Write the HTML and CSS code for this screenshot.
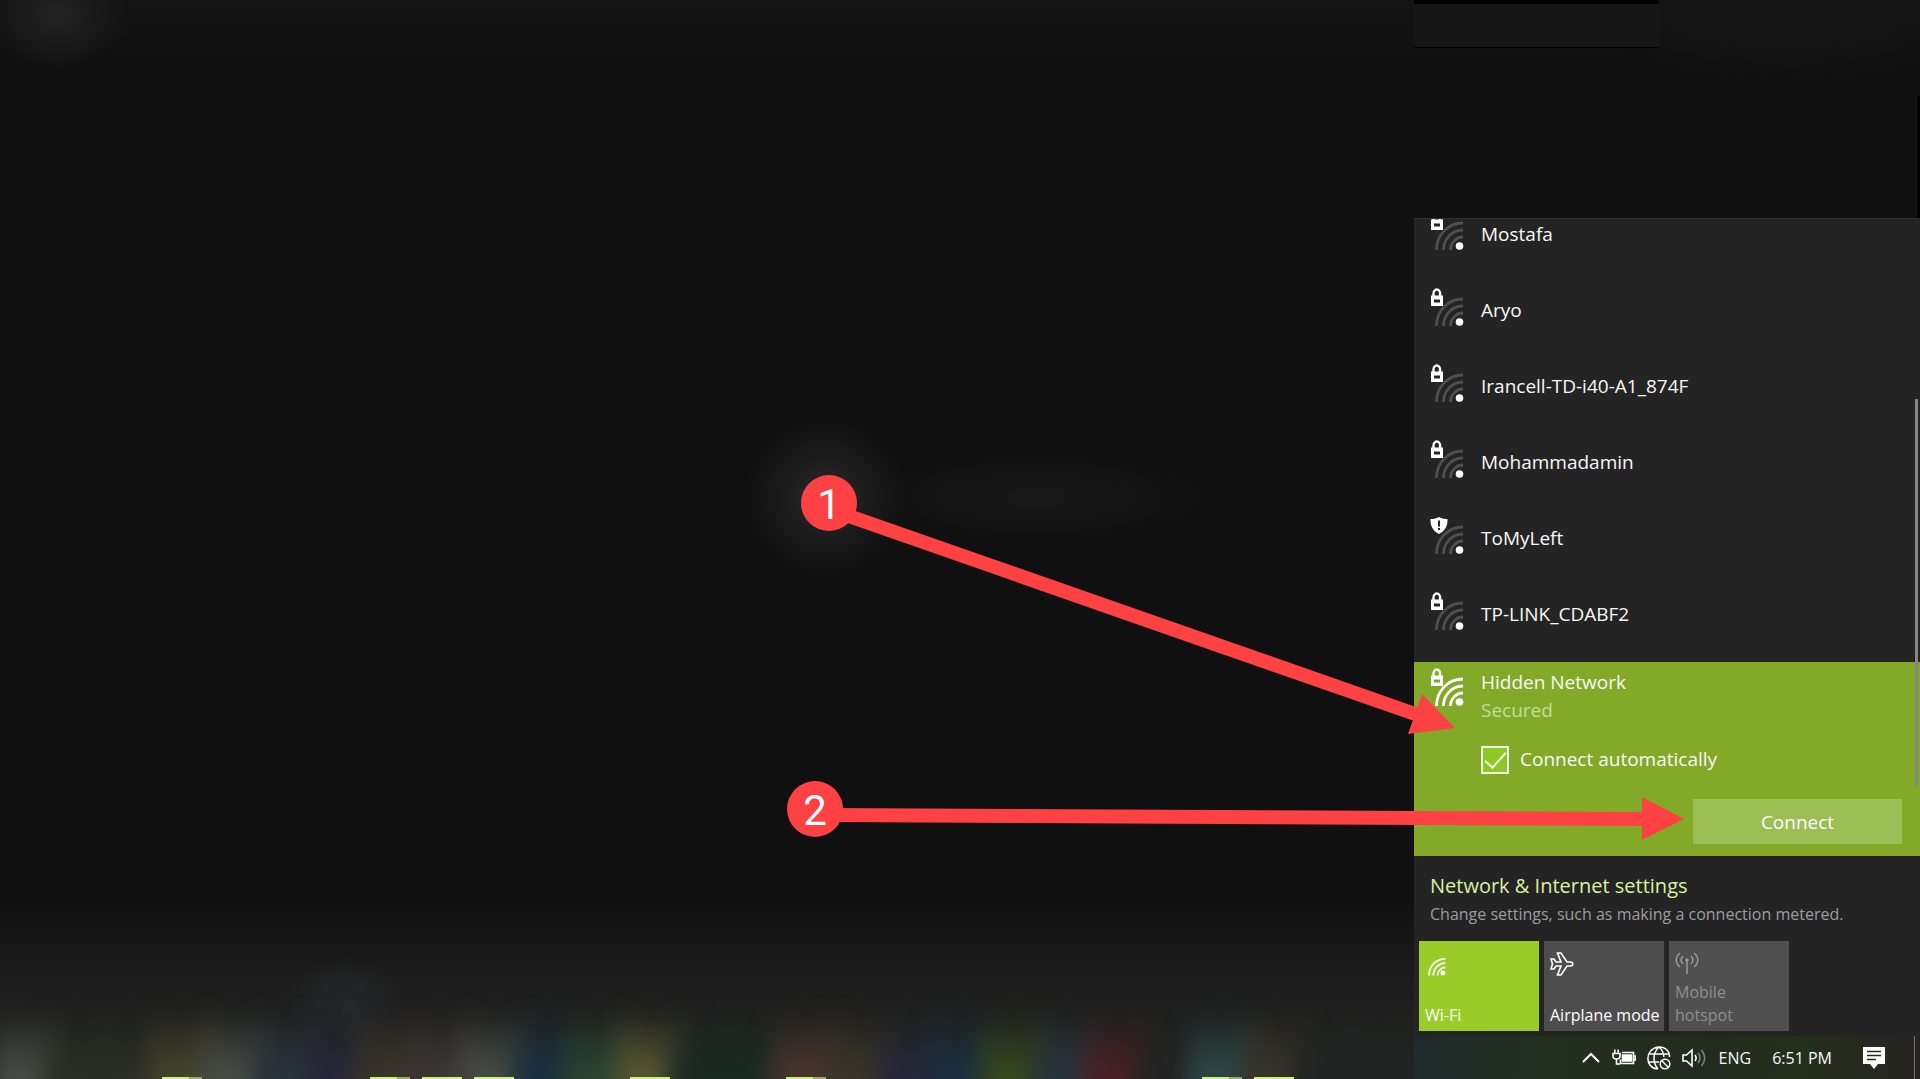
FILE: index.html
```html
<!DOCTYPE html>
<html lang="en">
<head>
<meta charset="UTF-8">
<meta name="viewport" content="width=device-width, initial-scale=1.0">
<title>Connect to a hidden network</title>
<link rel="stylesheet" href="styles.css">
</head>
<body>

  <!-- shared icons -->
  <svg class="icon-defs" aria-hidden="true">
    <symbol id="arcs" viewBox="0 0 34 39">
      <g fill="none" stroke="currentColor" stroke-width="2.8">
        <path d="M6.500 38C6.500 23 18 11 33 11"/>
        <path d="M13.500 38C13.500 27 22 18 33 18"/>
        <path d="M20.500 38C20.500 31 26 25 33 25"/>
      </g>
    </symbol>
    <symbol id="lock" viewBox="0 0 34 39">
      <path d="M3.500 8V5.500a3.300 4 0 0 1 6.600 0V8" fill="none" stroke="#fff" stroke-width="2.400"/>
      <path d="M1 7.500h12V18H1zM4 11.500v3h6v-3z" fill="#fff" fill-rule="evenodd"/>
      <circle cx="29.500" cy="34" r="3.800" fill="#fff"/>
    </symbol>
    <symbol id="shield" viewBox="0 0 34 39">
      <path d="M9 1c2.500 1.500 5 2 8.500 2 .3 7-2.500 12-8.500 15C3 15 .2 10 .5 3 4 3 6.500 2.500 9 1z" fill="#fff"/>
      <path d="M9 4.500v6M9 12v2" stroke="#242424" stroke-width="2"/>
      <circle cx="29.500" cy="34" r="3.800" fill="#fff"/>
    </symbol>
  </svg>

  <main class="desktop">
    <div class="titlebar"></div>
    <div class="edge"></div>

    <section class="flyout" aria-label="Networks">
      <ul class="networks">
        <li class="network">
          <svg class="signal"><use href="#arcs"/><use href="#lock"/></svg>
          <span class="name">Mostafa</span>
        </li>
        <li class="network">
          <svg class="signal"><use href="#arcs"/><use href="#lock"/></svg>
          <span class="name">Aryo</span>
        </li>
        <li class="network">
          <svg class="signal"><use href="#arcs"/><use href="#lock"/></svg>
          <span class="name">Irancell-TD-i40-A1_874F</span>
        </li>
        <li class="network">
          <svg class="signal"><use href="#arcs"/><use href="#lock"/></svg>
          <span class="name">Mohammadamin</span>
        </li>
        <li class="network">
          <svg class="signal"><use href="#arcs"/><use href="#shield"/></svg>
          <span class="name">ToMyLeft</span>
        </li>
        <li class="network">
          <svg class="signal"><use href="#arcs"/><use href="#lock"/></svg>
          <span class="name">TP-LINK_CDABF2</span>
        </li>
      </ul>

      <div class="selected">
        <svg class="signal"><use href="#arcs"/><use href="#lock"/></svg>
        <div class="details">
          <div class="name">Hidden Network</div>
          <div class="status">Secured</div>
          <div class="auto">
            <input type="checkbox" id="auto" checked>
            <label for="auto">Connect automatically</label>
          </div>
          <button class="connect">Connect</button>
        </div>
      </div>
      <div class="scrollbar"></div>

      <div class="settings">
        <a href="#">Network &amp; Internet settings</a>
        <p>Change settings, such as making a connection metered.</p>
      </div>

      <div class="tiles">
        <button class="tile on">
          <svg width="21" height="24" viewBox="0 0 34 39"><use href="#arcs"/><circle cx="29" cy="34" r="4" fill="#fff"/></svg>
          <span>Wi-Fi</span>
        </button>
        <button class="tile">
          <svg width="24" height="24" viewBox="0 0 24 24" fill="none" stroke="#fff" stroke-width="1.600"><path d="M1 7h3l2 3h5L7.500 1H11l6 9h3.500c3 0 3 4 0 4H17l-6 9H7.500L11 14H6l-2 3H1l1.500-5z"/></svg>
          <span>Airplane mode</span>
        </button>
        <button class="tile off" disabled>
          <svg width="24" height="24" viewBox="0 0 24 24" fill="none" stroke="#9a9a9a" stroke-width="1.500"><path d="M12 9v14M5 2C0 6 0 12 5 16M19 2c5 4 5 10 0 14M8 5C5.500 7.500 5.500 10.500 8 13M16 5c2.500 2.500 2.500 5.500 0 8"/><circle cx="12" cy="9" r="1"/></svg>
          <span>Mobile hotspot</span>
        </button>
      </div>
    </section>
  </main>

  <footer class="taskbar">
    <!-- pinned apps, out of focus -->
    <div class="apps">
      <i class="app c-grey"></i>
      <i class="app c-moss"></i>
      <i class="app c-moss"></i>
      <i class="app c-olive open grouped"></i>
      <i class="app c-grey"></i>
      <i class="app c-slate"></i>
      <i class="app c-indigo"></i>
      <i class="app c-sand open grouped"></i>
      <i class="app c-taupe open"></i>
      <i class="app c-grey open"></i>
      <i class="app c-blue"></i>
      <i class="app c-green"></i>
      <i class="app c-yellow open"></i>
      <i class="app c-pine"></i>
      <i class="app c-pine"></i>
      <i class="app c-brown open grouped"></i>
      <i class="app c-sand"></i>
      <i class="app c-indigo"></i>
      <i class="app c-blue"></i>
      <i class="app c-lime"></i>
      <i class="app c-slate"></i>
      <i class="app c-red"></i>
      <i class="app c-dark"></i>
      <i class="app c-teal open grouped"></i>
      <i class="app c-sand open"></i>
      <i class="app c-dark"></i>
      <i class="app c-dark"></i>
    </div>

    <div class="tray">
      <button aria-label="Show hidden icons"><svg width="20" height="24" viewBox="0 0 20 24" fill="none" stroke="#fff" stroke-width="2"><path d="M2 16l8-8 8 8"/></svg></button>
      <button aria-label="Battery"><svg width="24" height="24" viewBox="0 0 24 24" fill="none" stroke="#fff" stroke-width="1.600"><path d="M10 6.500h11.500v11h-13v-4M22 10h1.500v4H22M1 7.500h7v2.500a3.500 3 0 0 1-7 0zM2.800 7V3.500M6.200 7V3.500M4.500 13v5H8"/><path d="M10.500 9h9v6h-9z" fill="#fff"/></svg></button>
      <button aria-label="Network"><svg width="24" height="24" viewBox="0 0 24 24" fill="none" stroke="#fff" stroke-width="1.500"><path d="M10.500 23C-2 22-3 3 11.500 1c8-.5 11.500 6 11 10M1.500 8h20.500M1.500 16H12M12 1c-6.500 6-6.500 16-1 22M12 1c3.500 3 4.800 6.500 4.800 10"/><circle cx="18" cy="18" r="4.800"/><path d="M14.800 14.800l6.400 6.400"/></svg></button>
      <button aria-label="Volume"><svg width="24" height="24" viewBox="0 0 24 24" fill="none" stroke="#fff" stroke-width="1.600"><path d="M1 9h3.500L10 4v16l-5.500-5H1z"/><path d="M13 9c1.500 2 1.500 4 0 6"/><path d="M16 7c2.500 3 2.500 7 0 10M19.500 4c4 5 4 11 0 16" stroke="#7c837a"/></svg></button>
      <button class="lang">ENG</button>
      <button class="clock">6:51 PM</button>
      <button class="notify" aria-label="Notifications"><svg width="24" height="24" viewBox="0 0 24 24"><path d="M1 1h22v17h-7l-4 5-4-5H1z" fill="#fff"/><path d="M5 5.500h14M5 9.500h14M5 13.500h9" stroke="#272a24" stroke-width="1.500"/></svg></button>
      <span class="peek"></span>
    </div>
  </footer>

  <!-- numbered steps -->
  <svg class="steps" viewBox="0 0 1920 1079" aria-label="Step arrows">
    <g stroke="#fe4143" stroke-width="14">
      <path d="M840 513L1418 715"/>
      <path d="M830 815L1644 819"/>
    </g>
    <g fill="#fe4143">
      <path d="M1422 694L1455 728L1408 734z"/>
      <path d="M1642 797L1684 819L1642 840z"/>
      <circle cx="829" cy="503" r="28"/>
      <circle cx="815" cy="809" r="28"/>
    </g>
    <text x="829" y="519">1</text>
    <text x="815" y="825">2</text>
  </svg>

</body>
</html>
```

FILE: styles.css
```css
* {
  box-sizing: border-box;
}

body {
  margin: 0;
  min-height: 100vh;
  display: flex;
  flex-direction: column;
  overflow: hidden;
  background: #101010;
  color: #f8f8f8;
  font-family: "Open Sans", "Noto Sans", sans-serif;
  font-size: 19px;
}

button {
  margin: 0;
  padding: 0;
  border: none;
  background: none;
  color: inherit;
  font: inherit;
}

.icon-defs {
  position: absolute;
  width: 0;
  height: 0;
}

/* desktop */
.desktop {
  flex: 1;
  display: flex;
  justify-content: flex-end;
  align-items: flex-end;
  position: relative;
  background:
    radial-gradient(70px 55px at 3% 15px, #242424, #1b1b1b 45%, transparent),
    radial-gradient(80px 80px at 43% 48%, #2b2b2b, #1c1c1c 50%, transparent),
    radial-gradient(170px 45px at 54% 48%, #191919, transparent),
    radial-gradient(180px 60px at 93% 25px, #161616, transparent),
    radial-gradient(60px 50px at 18% 97%, #26282a, transparent),
    linear-gradient(#141414, #101010 60px, #101010 900px, #1e1e1e 990px, #20211f);
}

.titlebar {
  position: absolute;
  top: 0;
  right: 261px;
  width: 245px;
  height: 48px;
  background: #161616;
  border-top: 4px solid #000;
  border-bottom: 1px solid #000;
}

.edge {
  position: absolute;
  top: 96px;
  right: 0;
  width: 3px;
  height: 122px;
  background: #000;
}

/* network flyout */
.flyout {
  position: relative;
  z-index: 1;
  width: 506px;
  background: #242424;
  border-top: 1px solid #333;
}

.networks {
  display: flex;
  flex-direction: column;
  justify-content: flex-end;
  height: 443px;
  margin: 0;
  padding: 0;
  list-style: none;
  overflow: hidden;
}

.network {
  flex: none;
  display: flex;
  gap: 17px;
  height: 76px;
  padding: 6px 16px;
}

.network .name {
  padding-top: 8px;
}

.name,
.status {
  line-height: 28px;
}

.signal {
  flex: none;
  width: 34px;
  height: 39px;
  color: #505050;
}

.selected {
  display: flex;
  gap: 17px;
  height: 194px;
  padding: 6px 18px 12px 16px;
  background: #82aa28;
}

.selected .signal {
  color: #fff;
}

.details {
  flex: 1;
  display: flex;
  flex-direction: column;
}

.status {
  color: #c6dc98;
}

.auto {
  display: flex;
  align-items: center;
  gap: 11px;
  margin-top: 22px;
}

.auto input {
  appearance: none;
  width: 28px;
  height: 28px;
  margin: 0;
  border: 2px solid #f4f9e6;
  background: #90c728;
}

.auto input:checked::before {
  content: "";
  display: block;
  width: 19px;
  height: 9px;
  margin: 4px 2px;
  border: solid #f4f9e6;
  border-width: 0 0 2px 2px;
  transform: rotate(-48deg);
}

.auto label {
  line-height: 24px;
  padding-bottom: 2px;
}

.connect {
  align-self: flex-end;
  width: 209px;
  height: 45px;
  margin-top: auto;
  background: #9bbe55;
  color: #fff;
}

.scrollbar {
  position: absolute;
  top: 180px;
  right: 2px;
  width: 3px;
  height: 387px;
  background: #868686;
}

.settings {
  padding: 16px 16px 0;
}

.settings a {
  display: block;
  color: #d9f3a2;
  font-size: 20px;
  line-height: 28px;
  text-decoration: none;
}

.settings p {
  margin: 0;
  color: #9d9d9d;
  font-size: 16px;
  line-height: 28px;
}

.tiles {
  display: flex;
  gap: 5px;
  padding: 13px 5px 5px;
}

.tile {
  display: flex;
  flex-direction: column;
  justify-content: space-between;
  align-items: flex-start;
  width: 120px;
  height: 90px;
  padding: 11px 0 4px 6px;
  background: #4d4d4d;
  color: #fff;
  font-size: 16px;
  line-height: 23px;
  text-align: left;
  white-space: nowrap;
}

.tile.on {
  background: #99cc28;
}

.tile.off {
  padding: 10px 20px 4px 6px;
  background: #505050;
  color: #8f8f8f;
  white-space: normal;
}

/* taskbar */
.taskbar {
  display: flex;
  justify-content: space-between;
  height: 43px;
  background: #20211f;
}

.apps {
  display: flex;
}

.app {
  position: relative;
  width: 52px;
}

/* the blurred icon */
.app::before {
  content: "";
  position: absolute;
  inset: -25px -8px -30px;
  background: linear-gradient(transparent, currentColor 60px);
  filter: blur(12px);
}

.app.open::after {
  content: "";
  position: absolute;
  left: 6px;
  bottom: 0;
  z-index: 1;
  width: 40px;
  height: 2px;
  background: #c9ee7c;
}

.app.grouped::after {
  background: linear-gradient(90deg, #c9ee7c 27px, #98a970 27px);
}

.c-grey { color: #494c46; }
.c-moss { color: #2b2e25; }
.c-olive { color: #45432b; }
.c-slate { color: #2a353d; }
.c-indigo { color: #272838; }
.c-sand { color: #3b362a; }
.c-taupe { color: #3d3736; }
.c-blue { color: #1a3040; }
.c-green { color: #2a4530; }
.c-yellow { color: #5a5832; }
.c-pine { color: #1b2b24; }
.c-brown { color: #4a362e; }
.c-lime { color: #36481d; }
.c-red { color: #4a2024; }
.c-teal { color: #2c4848; }
.c-dark { color: #222524; }

.tray {
  position: relative;
  z-index: 1;
  display: flex;
  align-items: center;
  justify-content: flex-end;
  gap: 11px;
  width: 506px;
  padding-right: 5px;
  background: linear-gradient(90deg, #1f2a2c, #22301f 25%, #222c1e 60%, #24301c 75%, #262422);
  font-size: 16px;
}

.tray svg {
  display: block;
}

.lang {
  margin-left: 2px;
}

.clock {
  margin-left: 10px;
}

.notify {
  margin: 0 17px 0 19px;
}

.peek {
  width: 1px;
  height: 43px;
  background: #6e706c;
}

/* step arrows */
.steps {
  position: absolute;
  inset: 0;
  z-index: 2;
  width: 100%;
  height: 100%;
  pointer-events: none;
}

.steps text {
  fill: #fff;
  font-family: Roboto, sans-serif;
  font-size: 42px;
  text-anchor: middle;
}
```
